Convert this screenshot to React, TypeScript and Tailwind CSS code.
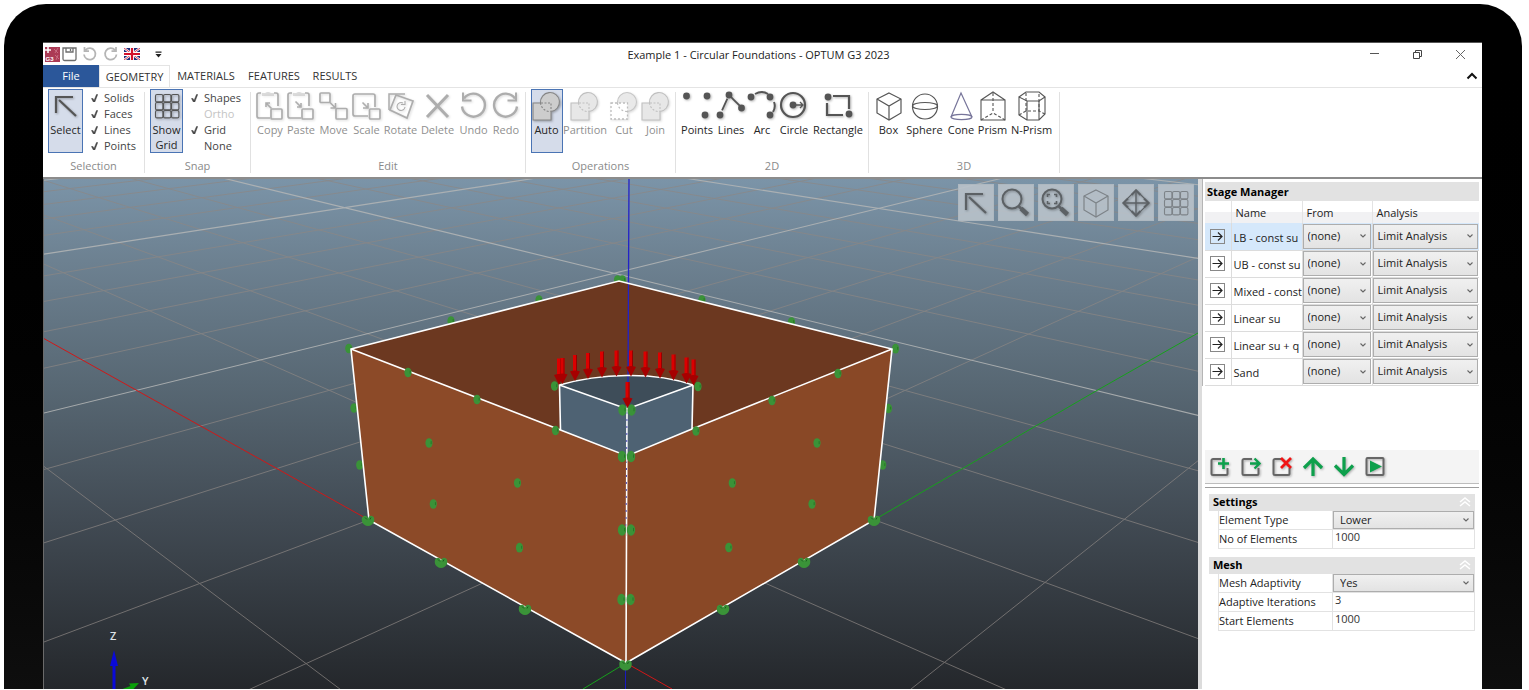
import type { ReactNode } from "react";
import clsx from "clsx";

/* ---------- shared bits ---------- */

const shadow = "drop-shadow-[1px_1px_1px_rgba(0,0,0,0.3)]";
const softShadow = "drop-shadow-[1px_1px_1px_rgba(0,0,0,0.15)]";

function Icon({ children, className }: { children: ReactNode; className?: string }) {
  return (
    <svg
      viewBox="0 0 32 32"
      aria-hidden="true"
      className={clsx("size-8 shrink-0", className)}
      fill="none"
      stroke="currentColor"
      strokeWidth="1.7"
    >
      {children}
    </svg>
  );
}

const nineCells = [0, 1, 2].flatMap((r) => [0, 1, 2].map((c) => [c, r]));

const arrowArt = (
  <>
    <path d="M6 23V7h17" strokeWidth="2.2" />
    <path d="M9 10l17 16" strokeWidth="2.2" />
  </>
);
const gridArt = nineCells.map(([c, r]) => (
  <rect key={`${c}${r}`} x={4.5 + c * 8} y={4.5 + r * 8} width="7.4" height="7.4" rx="1.5" strokeWidth="1.1" />
));
const cubeArt = (
  <>
    <path d="M16 3L28 9v14L16 30 4 23V9z" strokeWidth="1.2" />
    <path d="M4 9l12 7 12-7M16 16v14" strokeWidth="1.2" />
  </>
);

/* ---------- ribbon icons ---------- */

const clipboardArt = (
  <>
    <path d="M16 28H5a2 2 0 0 1-2-2V5a2 2 0 0 1 2-2h2M20 3h2a2 2 0 0 1 2 2v11" />
    <path d="M8 3h3l2-1h2l2 1h3v3H8z" fill="currentColor" stroke="none" opacity="0.4" />
    <rect x="17" y="19" width="11" height="10" rx="1" />
  </>
);

const unionArt = (
  <>
    <path d="M2 13h7.500A9.500 9.500 0 1 1 20 21.500V30H2z" strokeWidth="1.100" />
    <path d="M10 13h10v8M9.500 13a9.500 9.500 0 0 0 10 8.500" fill="none" strokeWidth="1.100" strokeDasharray="2 1.5" />
  </>
);

const art: Record<string, ReactNode> = {
  Copy: (
    <>
      {clipboardArt}
      <path d="M12 17v-4h4M12.500 13.500l5 5" strokeWidth="1.6" />
    </>
  ),
  Paste: (
    <>
      {clipboardArt}
      <path d="M16 13v4h-4M15.500 16.500l-5-5" strokeWidth="1.6" />
    </>
  ),
  Move: (
    <>
      <rect x="2" y="3" width="10" height="9.500" rx="1" />
      <rect x="18" y="18.500" width="11" height="10.500" rx="1" />
      <path d="M12 12.500l5 5M17.500 13v5h-5" strokeWidth="1.6" />
    </>
  ),
  Scale: (
    <>
      <path d="M17 26H4a2 2 0 0 1-2-2V6a2 2 0 0 1 2-2h18a2 2 0 0 1 2 2v11" />
      <rect x="18.500" y="19" width="10.500" height="10" rx="1" />
      <path d="M17 13v5h-5M16.500 17.500l-5-5" strokeWidth="1.6" />
    </>
  ),
  Rotate: (
    <>
      <path d="M4 20V4h16" strokeWidth="1.5" />
      <path d="M11 5l17 6-6 17-17-8z" />
      <path d="M18 13a4 4 0 1 0 2 4M20 11v3.500h-4" strokeWidth="1.1" />
    </>
  ),
  Delete: <path d="M5 5l21 22M26 5L5 27" strokeWidth="3" />,
  Undo: (
    <>
      <path d="M6 8.500a11.500 11.500 0 1 1-2 8" strokeWidth="2.4" />
      <path d="M5 2.500v8h8.500" strokeWidth="2" />
    </>
  ),
  Redo: (
    <>
      <path d="M25 8.500a11.500 11.500 0 1 0 2 8" strokeWidth="2.4" />
      <path d="M26 2.500v8h-8.500" strokeWidth="2" />
    </>
  ),
  Auto: (
    <g fill="#cdcdcd" stroke="#868686">
      {unionArt}
    </g>
  ),
  Partition: (
    <g fill="#e7e7e7" stroke="#c0c0c0">
      {unionArt}
    </g>
  ),
  Cut: (
    <>
      <circle cx="19" cy="12" r="9.500" fill="#e9e9e9" stroke="#c6c6c6" strokeWidth="1.100" />
      <path d="M3 13h16.500v16H3z" fill="#fff" stroke="#bdbdbd" strokeWidth="1.300" strokeDasharray="2 2" />
      <path d="M9.500 13a9.500 9.500 0 0 0 10 8.500" stroke="#bdbdbd" strokeWidth="1.200" strokeDasharray="2 2" />
    </>
  ),
  Join: (
    <g fill="#e7e7e7" stroke="#c0c0c0">
      {unionArt}
    </g>
  ),
  Points: (
    <g fill="currentColor" stroke="none">
      <circle cx="5.500" cy="6" r="3.400" />
      <circle cx="26" cy="6" r="3.400" />
      <circle cx="24" cy="25" r="3.400" />
    </g>
  ),
  Lines: (
    <>
      <path d="M5 25l9-20 13 13" strokeWidth="1.800" strokeDasharray="0 5 13 6 4 0 9 3" />
      <g fill="currentColor" stroke="none">
        <circle cx="5" cy="25" r="3.400" />
        <circle cx="14" cy="5" r="3.400" />
        <circle cx="26.500" cy="18" r="3.400" />
      </g>
    </>
  ),
  Arc: (
    <>
      <path d="M9 4q7-4 13 0M28 12q2 5-1 10" strokeWidth="2" />
      <g fill="currentColor" stroke="none">
        <circle cx="5" cy="7" r="3.400" />
        <circle cx="24" cy="7" r="3.400" />
        <circle cx="24" cy="25" r="3.400" />
      </g>
    </>
  ),
  Circle: (
    <>
      <circle cx="15" cy="15" r="12" strokeWidth="2.200" />
      <circle cx="15" cy="15" r="3.400" fill="currentColor" stroke="none" />
      <path d="M18 15h7M22 12l3 3-3 3" strokeWidth="1.300" />
    </>
  ),
  Rectangle: (
    <>
      <path d="M5 13v12h16M11 6h16v13" strokeWidth="2.200" />
      <circle cx="6" cy="7" r="3.400" fill="currentColor" stroke="none" />
      <circle cx="27" cy="24" r="3.400" fill="currentColor" stroke="none" />
    </>
  ),
  Box: cubeArt,
  Sphere: (
    <g strokeWidth="1.200">
      <circle cx="16" cy="16.500" r="12.500" />
      <ellipse cx="16" cy="16" rx="12.500" ry="3.500" />
    </g>
  ),
  Cone: (
    <g strokeWidth="1.200" stroke="#77759a">
      <path d="M6 27L16 3l11 24" />
      <ellipse cx="16.500" cy="27" rx="10.500" ry="2.600" />
    </g>
  ),
  Prism: (
    <g strokeWidth="1.100">
      <path d="M4 10h24v20H4zM4 10l12-8 12 8" />
      <path d="M16 3v20M4 30l12-7 12 7" strokeDasharray="3 2" />
    </g>
  ),
  "N-Prism": (
    <g strokeWidth="1.100">
      <path d="M10 2h13l6 5-6 4H11L3 7zM3 7v18l8 5M29 7v17l-6 6H11V11M23 11v19" />
      <path d="M10 3v18h13V3M3 25l7-4M29 24l-6-3" strokeDasharray="3 2" />
    </g>
  ),
};

/* ---------- ribbon ---------- */

type Tool = { name: string; width: string; active?: boolean; disabled?: boolean };

const editTools: Tool[] = [
  { name: "Copy", width: "w-[31px]", disabled: true },
  { name: "Paste", width: "w-[31px]", disabled: true },
  { name: "Move", width: "w-[34px]", disabled: true },
  { name: "Scale", width: "w-[32px]", disabled: true },
  { name: "Rotate", width: "w-[36px]", disabled: true },
  { name: "Delete", width: "w-[38px]", disabled: true },
  { name: "Undo", width: "w-[34px]", disabled: true },
  { name: "Redo", width: "w-[31px]", disabled: true },
];
const operationTools: Tool[] = [
  { name: "Auto", width: "w-[32px]", active: true },
  { name: "Partition", width: "w-[45px]", disabled: true },
  { name: "Cut", width: "w-[33px]", disabled: true },
  { name: "Join", width: "w-[30px]", disabled: true },
];
const tools2d: Tool[] = [
  { name: "Points", width: "w-[34px]" },
  { name: "Lines", width: "w-[34px]" },
  { name: "Arc", width: "w-[28px]" },
  { name: "Circle", width: "w-[36px]" },
  { name: "Rectangle", width: "w-[52px]" },
];
const tools3d: Tool[] = [
  { name: "Box", width: "w-[32px]" },
  { name: "Sphere", width: "w-[40px]" },
  { name: "Cone", width: "w-[33px]" },
  { name: "Prism", width: "w-[30px]" },
  { name: "N-Prism", width: "w-[48px]" },
];

function ToolButton({
  width,
  label,
  icon,
  active,
  disabled,
  flat,
}: {
  width: string;
  label: ReactNode;
  icon: ReactNode;
  active?: boolean;
  disabled?: boolean;
  flat?: boolean;
}) {
  return (
    <button
      type="button"
      disabled={disabled}
      className={clsx(
        "flex h-16 shrink-0 flex-col items-center border leading-[15px]",
        width,
        active ? "border-[#4a74b4] bg-[#d5dcea]" : "border-transparent",
        disabled ? "text-[#8f8f8f]" : "text-[#262626]",
      )}
    >
      <Icon
        className={clsx(disabled ? "text-[#adadad]" : "text-[#555]", !flat && (disabled ? softShadow : shadow))}
      >
        {icon}
      </Icon>
      <span className="whitespace-nowrap">{label}</span>
    </button>
  );
}

function Group({ title, width, children }: { title: string; width: string; children: ReactNode }) {
  return (
    <section aria-label={title} className={clsx("flex shrink-0 flex-col", width)}>
      <div className="flex flex-1 justify-center pt-px">{children}</div>
      <div className="h-5 text-center leading-[18px] text-[#8a8a8a]">{title}</div>
    </section>
  );
}

const Divider = () => <div className="my-1 w-px shrink-0 bg-[#e1e1e1]" />;

function ToolGroup({ title, width, tools, flat }: { title: string; width: string; tools: Tool[]; flat?: boolean }) {
  return (
    <Group title={title} width={width}>
      {tools.map((t) => (
        <ToolButton
          key={t.name}
          width={t.width}
          label={t.name}
          icon={art[t.name]}
          active={t.active}
          disabled={t.disabled}
          flat={flat}
        />
      ))}
    </Group>
  );
}

function Check({ label, checked, disabled }: { label: string; checked?: boolean; disabled?: boolean }) {
  return (
    <label className={clsx("relative flex h-4 items-center gap-1.5", disabled ? "text-[#c4c4c4]" : "text-[#444]")}>
      <input type="checkbox" defaultChecked={checked} disabled={disabled} className="peer sr-only" />
      <svg viewBox="0 0 7 8" aria-hidden="true" className="invisible h-2 w-[7px] peer-checked:visible">
        <path d="M0.500 4.500h1.500L3 6.500 5.500 0.500h1.200L3.800 8H2.400z" fill="#444" stroke="#444" strokeWidth="0.500" />
      </svg>
      {label}
    </label>
  );
}

function Ribbon() {
  return (
    <div className="flex h-[90px] shrink-0 border-t border-[#e4e4e4] bg-white">
      <Group title="Selection" width="w-[101px]">
        <div className="flex w-full gap-2 pl-[5px]">
          <ToolButton width="w-[35px]" label="Select" icon={arrowArt} active />
          <div className="pt-px">
            <Check label="Solids" checked />
            <Check label="Faces" checked />
            <Check label="Lines" checked />
            <Check label="Points" checked />
          </div>
        </div>
      </Group>
      <Divider />
      <Group title="Snap" width="w-[105px]">
        <div className="flex w-full gap-2 pl-[5px]">
          <ToolButton
            width="w-[33px]"
            label={
              <>
                Show
                <br />
                Grid
              </>
            }
            icon={gridArt}
            active
          />
          <div className="pt-px">
            <Check label="Shapes" checked />
            <Check label="Ortho" disabled />
            <Check label="Grid" checked />
            <Check label="None" />
          </div>
        </div>
      </Group>
      <Divider />
      <ToolGroup title="Edit" width="w-[274px]" tools={editTools} />
      <Divider />
      <ToolGroup title="Operations" width="w-[149px]" tools={operationTools} />
      <Divider />
      <ToolGroup title="2D" width="w-[192px]" tools={tools2d} />
      <Divider />
      <ToolGroup title="3D" width="w-[190px]" tools={tools3d} flat />
      <Divider />
    </div>
  );
}

/* ---------- title bar and tabs ---------- */

function TitleBar() {
  return (
    <header className="grid h-[22px] shrink-0 grid-cols-[1fr_auto_1fr] items-center bg-white">
      <div className="flex items-center gap-[5px] pl-0.5">
        <div className="flex items-center gap-0.5">
          <svg viewBox="0 0 15 15" className="size-[15px]" aria-hidden="true">
            <rect width="15" height="15" fill="#ab3a55" />
            <path d="M3 0v6M0 3h6" stroke="#fff" strokeWidth="1.500" />
            <path d="M9 2l4 4M13 1l-3 5M10 8l4 4M13 8l-2 5" stroke="#c76a80" strokeWidth="1" />
            <text x="0.500" y="14" fontSize="6" fontWeight="700" fill="#fff" fontFamily="Liberation Sans, sans-serif">
              G3
            </text>
          </svg>
          <button type="button" aria-label="Save">
            <svg viewBox="0 0 15 15" className="size-[15px]" fill="none" stroke="#6d6d6d" strokeWidth="1.300">
              <path d="M1 2.500V12a1.500 1.500 0 0 0 1.500 1.500h10A1.500 1.500 0 0 0 14 12V1H1zM4 1v4h7V1M8.500 2v2" />
            </svg>
          </button>
        </div>
        <button type="button" aria-label="Undo" disabled>
          <svg viewBox="0 0 32 32" className="size-4" fill="none" stroke="#b5b5b5" strokeWidth="3.500">
            <path d="M7 8a11.500 11.500 0 1 1-3 9M5 2v8h9" />
          </svg>
        </button>
        <button type="button" aria-label="Redo" disabled>
          <svg viewBox="0 0 32 32" className="size-4" fill="none" stroke="#b5b5b5" strokeWidth="3.500">
            <path d="M24 8a11.500 11.500 0 1 0 3 9M26 2v8h-9" />
          </svg>
        </button>
        <button type="button" aria-label="Language" className="mr-2.5">
          <svg viewBox="0 0 16 12" className="h-3 w-4">
            <rect width="16" height="12" fill="#1d2c7a" />
            <path d="M0 0l16 12M16 0L0 12" stroke="#fff" strokeWidth="2.200" />
            <path d="M0 0l16 12M16 0L0 12" stroke="#d3102c" strokeWidth="0.800" />
            <path d="M8 0v12M0 6h16" stroke="#fff" strokeWidth="4" />
            <path d="M8 0v12M0 6h16" stroke="#d3102c" strokeWidth="2.200" />
          </svg>
        </button>
        <button type="button" aria-label="Customize toolbar">
          <svg viewBox="0 0 7 7" className="size-[7px]" fill="#222">
            <path d="M0.500 0.500h6v1.200h-6zM0.500 3h6L3.500 6.500z" />
          </svg>
        </button>
      </div>
      <h1 className="pt-0.5 pr-2 text-[#222]">Example 1 - Circular Foundations - OPTUM G3 2023</h1>
      <div className="flex items-center justify-end gap-8 pr-4">
        <button type="button" aria-label="Minimize">
          <svg viewBox="0 0 11 11" className="size-[11px]" stroke="#555">
            <path d="M1 4.500h9" />
          </svg>
        </button>
        <button type="button" aria-label="Restore">
          <svg viewBox="0 0 11 11" className="size-[11px]" fill="none" stroke="#444">
            <path d="M1.500 3.500h6v6h-6zM3.500 3.500v-2h6v6h-2" />
          </svg>
        </button>
        <button type="button" aria-label="Close">
          <svg viewBox="0 0 11 11" className="size-[11px]" stroke="#666">
            <path d="M1 1l9 9M10 1L1 10" />
          </svg>
        </button>
      </div>
    </header>
  );
}

function Tabs() {
  return (
    <nav className="flex h-[22px] shrink-0 items-stretch bg-white text-[#333]">
      <button type="button" className="w-14 bg-[#2b579a] pt-px text-white">
        File
      </button>
      <button type="button" className="-mb-px w-[71px] border border-b-0 border-[#e4e4e4] bg-white">
        GEOMETRY
      </button>
      <button type="button" className="w-[72px] pt-px">
        MATERIALS
      </button>
      <button type="button" className="w-16 pt-px">
        FEATURES
      </button>
      <button type="button" className="w-[58px] pt-px">
        RESULTS
      </button>
      <button type="button" aria-label="Collapse ribbon" className="ml-auto pr-1">
        <svg viewBox="0 0 12 8" className="h-2 w-3" fill="none" stroke="#111" strokeWidth="2">
          <path d="M1.500 6.500L6 2l4.500 4.500" />
        </svg>
      </button>
    </nav>
  );
}

/* ---------- 3D scene ---------- */

/** Projects a point of the ground plane (grid units from the origin) to the canvas. */
function project(u: number, v: number): [number, number] {
  const w = 1 + 0.1315 * u + 0.1337 * v;
  return [(626 - 80 * u + 240.5 * v) / w, (663 - 3.2 * u - 2.3 * v) / w];
}

function gridPath(major: boolean) {
  const far = 60;
  const near = (n: number) => Math.max(-30, (0.12 - 1 - 0.1325 * n) / 0.1325);
  let d = "";
  for (let n = -20; n <= 45; n++) {
    if (n === 0 || (n % 5 === 0) !== major) continue;
    const [ax, ay] = project(n, near(n));
    const [bx, by] = project(n, far);
    const [cx, cy] = project(near(n), n);
    const [ex, ey] = project(far, n);
    d += `M${ax.toFixed(1)} ${ay.toFixed(1)}L${bx.toFixed(1)} ${by.toFixed(1)}`;
    d += `M${cx.toFixed(1)} ${cy.toFixed(1)}L${ex.toFixed(1)} ${ey.toFixed(1)}`;
  }
  return d;
}

const loads = [
  [559, 358.5], [562.5, 358], [575, 355], [588, 353], [602, 351.5], [616.5, 350.5], [631, 350.5],
  [645.5, 351.5], [660, 352.5], [673.5, 354.5], [686.5, 357.5], [693.5, 359.5],
];

const supportsBack = [
  [348.8, 348.5], [354, 408], [359.7, 465], [451, 321], [539, 300], [617.5, 280], [622.5, 280],
  [702, 300], [791.5, 322], [895.5, 348.7], [888.5, 408.5], [882.7, 465],
];
const supports = [
  [408, 372.5], [477, 399.5], [555.5, 430.5], [554.5, 386], [698, 386.5], [696, 431], [772, 400.5],
  [838, 373.5], [429, 443], [817, 443], [517.5, 483], [433.3, 504], [519.5, 547.7], [732.3, 483],
  [812, 504], [728.8, 547.5],
];
const pairs = [
  [627, 410], [626.5, 456.5], [626.5, 530], [626, 599.5],
];
const corners = [
  [368, 520.5], [441, 562.5], [525, 609.5], [625.5, 665], [723, 609.5], [804, 562.5], [874, 520.5],
];

function Load({ x, y }: { x: number; y: number }) {
  return (
    <g>
      <path d={`M${x - 2} ${y}h4v17h-4z`} fill="#dc0000" />
      <path d={`M${x + 1} ${y}h1v17h-1z`} fill="#960000" />
      <path d={`M${x - 5} ${y + 16.5}q5-2 10 0l-5 9.500z`} fill="#a60000" />
    </g>
  );
}

function Support({ x, y, r = 3.6 }: { x: number; y: number; r?: number }) {
  return (
    <g>
      <ellipse cx={x} cy={y} rx={r} ry={r * 1.35} fill="#3a9338" />
      <path d={`M${x + r * 0.6} ${y - r * 0.5}v${r * 0.8}`} stroke="#237024" strokeWidth="0.800" />
    </g>
  );
}

function Scene() {
  return (
    <svg
      viewBox="44 179 1154 510"
      preserveAspectRatio="xMidYMid slice"
      role="img"
      aria-label="3D model"
      className="absolute inset-0 size-full"
    >
      <defs>
        <linearGradient id="sky" x1="0" y1="0" x2="0" y2="1">
          <stop offset="0" stopColor="#7b94a8" />
          <stop offset="0.16" stopColor="#6d8191" />
          <stop offset="0.400" stopColor="#586874" />
          <stop offset="0.670" stopColor="#414a53" />
          <stop offset="1" stopColor="#24272b" />
        </linearGradient>
      </defs>
      <rect x="43" y="179" width="1156" height="511" fill="url(#sky)" />
      <path d={gridPath(false)} stroke="#8d8784" strokeWidth="1" opacity="0.7" />
      <path d={gridPath(true)} stroke="#b4b6b6" strokeWidth="1.100" opacity="0.85" />
      <path d="M43 338L136 390 369 520 M626 663L672 689" stroke="#d01818" fill="none" />
      <path d="M1198 333L1096 391 874 520 M626 663L583 689" stroke="#17a01c" fill="none" />

      {supportsBack.map(([x, y]) => (
        <Support key={`${x}-${y}`} x={x} y={y} />
      ))}

      <path d="M351 349L619 281L892 349L627 456z" fill="#6c3820" />
      <path d="M351 349L627 456L626 663L369 520z" fill="#8c4a28" />
      <path d="M892 349L627 456L626 663L874 520z" fill="#894826" />
      <path d="M559.500 385Q590 376 627 375.500T693 385L692 429L627 456L560.500 430z" fill="#4e6273" />
      <path d="M559.500 385Q590 376 627 375.500T693 385L627 409z" fill="#3e4d59" />
      <path d="M629 179L628.500 281L628 385" stroke="#2222c8" strokeWidth="1.300" fill="none" />
      <path
        d="M351 349L619 281L892 349L874 520L626 663L369 520zL560.500 430L627 456L692 429L892 349M560.500 430L559.500 385Q590 376 627 375.500T693 385L692 429M559.500 385L627 409L693 385M627 409L626 663"
        stroke="#fff"
        strokeWidth="1.600"
        fill="none"
      />
      <path d="M627 412L626 530" stroke="#4a4ab8" strokeWidth="1" strokeDasharray="2 5" />
      <path d="M625.500 668V689" stroke="#1a1ac0" />

      {supports.map(([x, y]) => (
        <Support key={`${x}-${y}`} x={x} y={y} />
      ))}
      {pairs.map(([x, y]) => (
        <g key={`${x}-${y}`}>
          <Support x={x - 4.5} y={y} r={4.2} />
          <Support x={x + 4.5} y={y} r={4.2} />
          <path d={`M${x} ${y - 6}v12`} stroke="#d8e0d8" strokeWidth="0.800" />
        </g>
      ))}
      {corners.map(([x, y]) => (
        <g key={`${x}-${y}`}>
          <path
            d={`M${x - 6} ${y - 3}q2-3 5-1l1 2 1-2q3-2 5 1q1 5-2 7q-4 3-8 0q-3-2-2-7z`}
            fill="#3a9338"
          />
          <path d={`M${x - 3} ${y - 3}l2 2M${x + 3} ${y - 3}l-1 2`} stroke="#1f5e20" />
        </g>
      ))}
      {loads.map(([x, y]) => (
        <Load key={x} x={x} y={y} />
      ))}
      <Load x={627.5} y={382} />

      <path d="M112.500 689V666H110L114 650l4 16h-2.500v23z" fill="#0a0ad8" />
      <path d="M139 683l-10 0.500 1.500 2.500-8 3h11z" fill="#0aa00a" />
      <g fill="#dfe3e6" fontSize="11" fontWeight="600" fontFamily="'Open Sans', sans-serif">
        <text x="110" y="640">
          Z
        </text>
        <text x="142" y="685">
          Y
        </text>
      </g>
    </svg>
  );
}

const viewTools: { name: string; icon: ReactNode; flat?: boolean }[] = [
  { name: "Select", icon: arrowArt },
  {
    name: "Zoom",
    icon: (
      <>
        <circle cx="12" cy="12" r="9.500" strokeWidth="2" />
        <path d="M18.500 19l3 3" strokeWidth="2.500" />
        <path d="M21 21.500l6.500 6" strokeWidth="4.500" />
      </>
    ),
  },
  {
    name: "Zoom extents",
    icon: (
      <>
        <circle cx="12" cy="12" r="9.500" strokeWidth="2" />
        <path d="M7.500 10V7.500H10M14 7.500h2.500V10M16.500 14v2.500H14M10 16.500H7.500V14" strokeWidth="1.600" />
        <path d="M18.500 19l3 3" strokeWidth="2.500" />
        <path d="M21 21.500l6.500 6" strokeWidth="4.500" />
      </>
    ),
  },
  { name: "View cube", icon: cubeArt, flat: true },
  {
    name: "Pan",
    icon: (
      <>
        <path d="M16 4v24M4 16h24" strokeWidth="1.400" />
        <path d="M16 3l13 13-13 13L3 16z" strokeWidth="1.100" />
        <path d="M11.500 8L16 3.500 20.500 8M11.500 24l4.500 4.500 4.500-4.500M8 11.500L3.500 16 8 20.500M24 11.500l4.500 4.500-4.500 4.500" strokeWidth="2" />
      </>
    ),
  },
  { name: "Grid", icon: gridArt, flat: true },
];

function Viewport() {
  return (
    <main className="relative min-w-0 flex-1 overflow-hidden border-l border-[#6a6a6a] bg-[#414a53]">
      <Scene />
      <div className="absolute top-[5px] right-1 flex gap-1">
        {viewTools.map((t) => (
          <button
            key={t.name}
            type="button"
            aria-label={t.name}
            className="flex h-[37px] w-9 items-center justify-center border border-[#aeb8c0] bg-[#b9c2ca]/90 text-[#5c6165]"
          >
            <Icon className={t.flat ? "text-[#7d8388]" : shadow}>{t.icon}</Icon>
          </button>
        ))}
      </div>
    </main>
  );
}

/* ---------- side panel ---------- */

function Dropdown({
  label,
  value,
  options,
  className,
}: {
  label: string;
  value: string;
  options: string[];
  className: string;
}) {
  return (
    <div className="relative">
      <select
        aria-label={label}
        defaultValue={value}
        className={clsx(
          "block w-full appearance-none border border-[#adadad] bg-linear-to-b from-[#f0f0f0] to-[#e3e3e3] text-[#222]",
          className,
        )}
      >
        {options.map((o) => (
          <option key={o}>{o}</option>
        ))}
      </select>
      <svg
        viewBox="0 0 8 8"
        aria-hidden="true"
        className="pointer-events-none absolute inset-y-0 right-1 my-auto size-2"
        fill="none"
        stroke="#666"
        strokeWidth="1.100"
      >
        <path d="M1.500 2.500L4 5l2.500-2.500" />
      </svg>
    </div>
  );
}

const stages = ["LB - const su", "UB - const su", "Mixed - const", "Linear su", "Linear su + q", "Sand"];

function StageTable() {
  return (
    <table className="w-full table-fixed border-collapse text-left text-[#222]">
      <colgroup>
        <col className="w-[26px]" />
        <col className="w-[71px]" />
        <col className="w-[70px]" />
        <col />
      </colgroup>
      <thead>
        <tr className="h-[22px] bg-linear-to-b from-white from-50% to-[#f1f1f3] to-50%">
          <th className="border-r border-[#e3e3e3]" aria-label="Activate" />
          <th className="border-r border-[#e3e3e3] p-0 pt-0.5 pl-1 font-normal">Name</th>
          <th className="border-r border-[#e3e3e3] p-0 pt-0.5 pl-1 font-normal">From</th>
          <th className="p-0 pt-0.5 pl-1 font-normal">Analysis</th>
        </tr>
      </thead>
      <tbody>
        {stages.map((name, i) => (
          <tr key={name} className={clsx("h-[27px] border-b border-[#dcdcdc]", i === 0 && "bg-[#d5e8fb]")}>
            <td className="border-r border-[#dcdcdc] p-0">
              <button
                type="button"
                aria-label={`Activate ${name}`}
                className="mx-auto flex size-[15px] items-center justify-center border border-[#888]"
              >
                <svg viewBox="0 0 11 11" className="size-[11px]" fill="none" stroke="#222" strokeWidth="1.200">
                  <path d="M0.500 5.500h9.500M6 1.500l4 4-4 4" />
                </svg>
              </button>
            </td>
            <td className="border-r border-[#dcdcdc] p-0 pt-[3px] pl-0.5 whitespace-nowrap">{name}</td>
            <td className="border-r border-[#dcdcdc] p-0 pr-px">
              <Dropdown label={`${name} from`} value="(none)" options={["(none)"]} className="h-[25px] pl-1" />
            </td>
            <td className="p-0 pr-px">
              <Dropdown
                label={`${name} analysis`}
                value="Limit Analysis"
                options={["Limit Analysis"]}
                className="h-[25px] pl-1"
              />
            </td>
          </tr>
        ))}
      </tbody>
    </table>
  );
}

const page = (
  <path
    d="M12 4H4a1.500 1.500 0 0 0-1.500 1.500v13A1.500 1.500 0 0 0 4 20h13a1.500 1.500 0 0 0 1.500-1.500V13"
    stroke="#666"
    strokeWidth="2"
  />
);
const stageTools: { name: string; icon: ReactNode }[] = [
  {
    name: "Add stage",
    icon: (
      <>
        {page}
        <path d="M14.500 3v11M9 8.500h11" stroke="#0da04c" strokeWidth="2.600" />
      </>
    ),
  },
  {
    name: "Clone stage",
    icon: (
      <>
        {page}
        <path d="M10 8.500h9M14.500 3.500l5 5-5 5" stroke="#0da04c" strokeWidth="2.400" />
      </>
    ),
  },
  {
    name: "Delete stage",
    icon: (
      <>
        {page}
        <path d="M10 3l10 10M20 3L10 13" stroke="#f01414" strokeWidth="2.800" />
      </>
    ),
  },
  { name: "Move up", icon: <path d="M11 21V4M2 13L11 4l9 9" stroke="#0da04c" strokeWidth="3.200" /> },
  { name: "Move down", icon: <path d="M11 2v17M2 10.500l9 9 9-9" stroke="#0da04c" strokeWidth="3.200" /> },
  {
    name: "Run",
    icon: (
      <>
        <rect x="2.500" y="3" width="17" height="17" rx="1" stroke="#666" strokeWidth="2" />
        <path d="M6 5.500l12 6L6 17.500z" fill="#0da04c" />
      </>
    ),
  },
];

type Field = { label: string; value: string; options?: string[] };

function Properties({ title, fields }: { title: string; fields: Field[] }) {
  return (
    <section className="text-[#222]">
      <h2 className="flex h-[17px] items-center justify-between bg-[#e2e2e2] pr-1 pl-1 font-bold text-black">
        {title}
        <svg viewBox="0 0 12 10" aria-hidden="true" className="h-2.5 w-3" fill="none" stroke="#fff" strokeWidth="1.500">
          <path d="M1 5l5-4 5 4M1 9l5-4 5 4" />
        </svg>
      </h2>
      <div className="ml-[9px] border-l border-[#e2e2e2]">
        {fields.map((f) => (
          <label key={f.label} className="flex h-[19px] border-r border-b border-[#e2e2e2]">
            <span className="w-[114px] shrink-0 border-r border-[#e2e2e2] leading-[18px] whitespace-nowrap">
              {f.label}
            </span>
            {f.options ? (
              <span className="flex-1">
                <Dropdown label={f.label} value={f.value} options={f.options} className="h-[18px] pl-1.5" />
              </span>
            ) : (
              <input defaultValue={f.value} className="min-w-0 flex-1 bg-white pb-0.5 pl-0.5 text-[#333]" />
            )}
          </label>
        ))}
      </div>
    </section>
  );
}

function SidePanel() {
  return (
    <aside className="flex w-[284px] shrink-0 flex-col border-l-4 border-[#dcdcdc] bg-white">
      <div className="border-l border-[#b5b5b5] pt-[3px] pr-[3px] pl-0.5">
        <h2 className="h-[19px] bg-[#e2e2e2] pl-0.5 leading-[19px] font-bold text-black">Stage Manager</h2>
        <StageTable />
      </div>
      <div className="mt-16 mr-[3px] ml-[3px] border-b border-[#bdbdbd] bg-[#f4f4f4]">
        <div className="flex h-[33px] items-center gap-[9px] pl-1">
          {stageTools.map((t) => (
            <button key={t.name} type="button" aria-label={t.name}>
              <svg viewBox="0 0 22 22" className={clsx("size-[22px]", shadow)} fill="none">
                {t.icon}
              </svg>
            </button>
          ))}
        </div>
      </div>
      <div className="mr-[3px] ml-[3px] h-1 border-b border-[#9d9d9d]" />
      <div className="flex flex-col gap-2 pt-1.5 pr-[7px] pl-[7px]">
        <Properties
          title="Settings"
          fields={[
            { label: "Element Type", value: "Lower", options: ["Lower", "Upper", "Mixed"] },
            { label: "No of Elements", value: "1000" },
          ]}
        />
        <Properties
          title="Mesh"
          fields={[
            { label: "Mesh Adaptivity", value: "Yes", options: ["Yes", "No"] },
            { label: "Adaptive Iterations", value: "3" },
            { label: "Start Elements", value: "1000" },
          ]}
        />
      </div>
    </aside>
  );
}

export default function App() {
  return (
    <div className="flex h-screen flex-col bg-white pt-1 pr-[7px] pb-px pl-1 font-['Open_Sans','Noto_Sans',sans-serif] text-[11px]">
      <div className="flex min-h-0 flex-1 flex-col rounded-t-[42px] bg-linear-to-b from-black to-[#0e0e0e] pt-[38px] pr-10 pl-[39px]">
        <div className="flex min-h-0 flex-1 flex-col border-t border-[#555]">
          <TitleBar />
          <Tabs />
          <Ribbon />
          <div className="flex min-h-0 flex-1 border-t-2 border-[#8c8c8c]">
            <Viewport />
            <SidePanel />
          </div>
        </div>
      </div>
    </div>
  );
}
